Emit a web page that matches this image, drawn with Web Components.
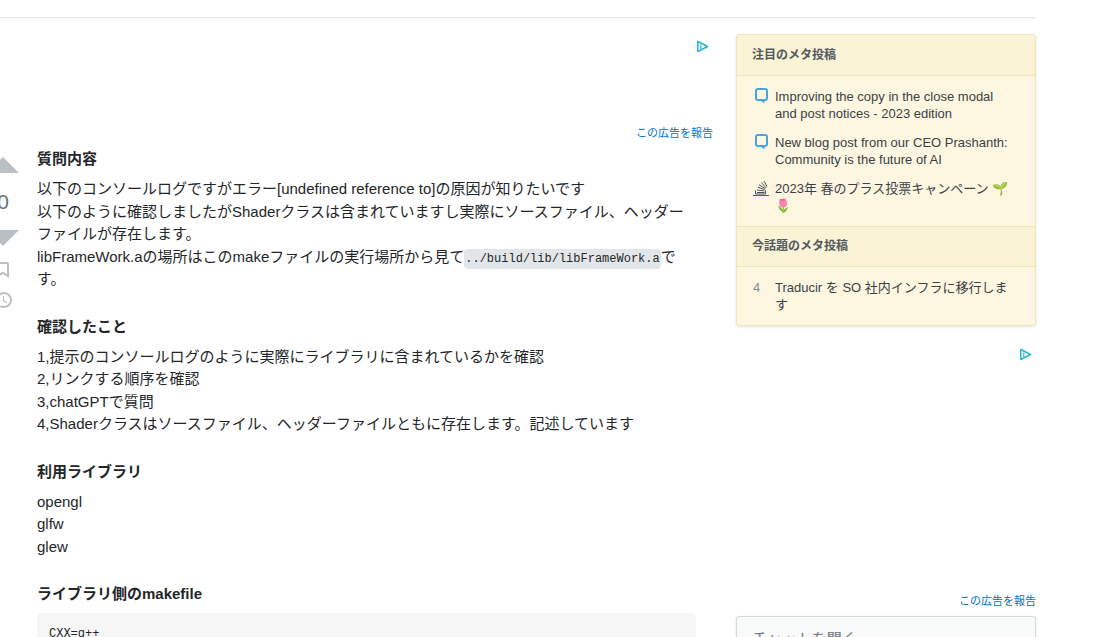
<!DOCTYPE html>
<html lang="ja">
<head>
<meta charset="utf-8">
<meta name="viewport" content="width=device-width, initial-scale=1">
<title>質問</title>
<style>
html{overflow-x:hidden;scrollbar-width:none}
body{margin:0;background:#fff;color:#232629;font-family:"Liberation Sans","Noto Sans CJK JP",sans-serif;font-size:15px;line-height:1.5}
</style>
</head>
<body>
<question-page></question-page>

<template id="page-t">
<style>
:host{display:block;padding:17px 60px 0 0}
.rule{border-top:1px solid #e3e6e8}
.cols{display:grid;grid-template-columns:minmax(0,1fr) 300px;gap:23px;padding-top:16px}
.post{display:grid;grid-template-columns:37px minmax(0,1fr);padding-right:17px;margin-top:7px}
aside{display:flex;flex-direction:column}
.meta{margin-bottom:16px}
chat-card{margin-top:7px}
</style>
<div class="rule"></div>
<div class="cols">
  <main>
    <ad-slot style="--ad-height:92px"></ad-slot>
    <div class="post"><vote-cell></vote-cell><post-body></post-body></div>
  </main>
  <aside>
    <bulletin-card class="meta">
      <bulletin-head>注目のメタ投稿</bulletin-head>
      <bulletin-list>
        <bulletin-item kind="meta">Improving the copy in the close modal and post notices - 2023 edition</bulletin-item>
        <bulletin-item kind="meta">New blog post from our CEO Prashanth: Community is the future of AI</bulletin-item>
        <bulletin-item kind="stack">2023年 春のプラス投票キャンペーン 🌱🌷</bulletin-item>
      </bulletin-list>
      <bulletin-head>今話題のメタ投稿</bulletin-head>
      <bulletin-list>
        <bulletin-item kind="4">Traducir を SO 社内インフラに移行します</bulletin-item>
      </bulletin-list>
    </bulletin-card>
    <ad-slot style="--ad-height:252px"></ad-slot>
    <chat-card>チャットを開く</chat-card>
  </aside>
</div>
</template>

<template id="ad-t">
<style>
:host{display:flex;flex-direction:column}
.ad{height:var(--ad-height);display:flex;justify-content:flex-end;align-items:flex-start;padding:6px 4px 0 0;box-sizing:border-box}
svg{display:block}
a{align-self:flex-end;color:#0074cc;font-size:11px;line-height:15px;text-decoration:none}
</style>
<div class="ad"><svg width="13" height="13" viewBox="0 0 13 13" fill="none" stroke="#28b5d1" stroke-width="1.5" stroke-linejoin="round"><path d="M1.800 1.500v10L11.500 6.500Z"/><path d="M4.800 4.500v4.500" stroke-width="1.200"/></svg></div>
<a href="#report">この広告を報告</a>
</template>

<template id="vote-t">
<style>
:host{display:flex;flex-direction:column;align-items:center;width:36px;margin-left:-15px;color:#6a737c}
button{display:block;border:0;padding:0;background:none;color:#babfc4;width:36px}
svg{display:block;margin:auto;fill:currentColor}
.n{font-size:21px;line-height:35px}
.s{height:30px}
</style>
<button aria-label="プラス投票"><svg width="36" height="36" viewBox="0 0 36 36"><path d="M2 25h32L18 9 2 25Z"/></svg></button>
<div class="n">0</div>
<button aria-label="マイナス投票"><svg width="36" height="36" viewBox="0 0 36 36"><path d="M2 11h32L18 27 2 11Z"/></svg></button>
<button class="s" aria-label="ブックマーク"><svg width="18" height="18" viewBox="0 0 18 18"><path d="m9 10.6 4 2.66V3H5v10.26l4-2.66ZM3 17V3c0-1.100.9-2 2-2h8a2 2 0 0 1 2 2v14l-6-4-6 4Z"/></svg></button>
<button class="s" aria-label="履歴"><svg width="20" height="18" viewBox="0 0 20 18"><path d="M3 9a8 8 0 1 1 3.73 6.77L8.2 14.3A6 6 0 1 0 5 9l3.01-.01-4 4-4-4h3L3 9Zm7-4h1.01L11 9.36l3.22 2.1-.6.93L10 10V5Z"/></svg></button>
</template>

<template id="body-t">
<style>
:host{display:block;padding-top:1px}
h4{font-size:15px;line-height:20px;margin:26px 0 9px}
h4:first-of-type{margin-top:0}
p{margin:0}
code,pre{font-family:"Liberation Mono","Noto Sans CJK JP",monospace;font-size:12px}
code{background:#e3e6e8;border-radius:4px;padding:3px 1px}
pre{margin:0;background:#f6f6f6;border-radius:5px;padding:12px;line-height:18px}
</style>
<h4>質問内容</h4>
<p>以下のコンソールログですがエラー[undefined reference to]の原因が知りたいです<br>以下のように確認しましたがShaderクラスは含まれていますし実際にソースファイル、ヘッダーファイルが存在します。<br>libFrameWork.aの場所はこのmakeファイルの実行場所から見て<code>../build/lib/libFrameWork.a</code>です。</p>
<h4>確認したこと</h4>
<p>1,提示のコンソールログのように実際にライブラリに含まれているかを確認<br>2,リンクする順序を確認<br>3,chatGPTで質問<br>4,Shaderクラスはソースファイル、ヘッダーファイルともに存在します。記述しています</p>
<h4>利用ライブラリ</h4>
<p>opengl<br>glfw<br>glew</p>
<h4>ライブラリ側のmakefile</h4>
<pre>CXX=g++</pre>
</template>

<template id="card-t">
<style>
:host{display:block;border:1px solid #f1e5bc;border-radius:3px;overflow:hidden;background:#fdf7e2;box-shadow:0 1px 3px #0000001c}
</style><slot></slot>
</template>
<template id="head-t">
<style>
:host{display:block;padding:10px 15px;background:#fbf3d5;border-bottom:1px solid #f1e5bc;color:#525960;font-size:12px;line-height:20px;font-weight:bold}
:host(:not(:first-child)){border-top:1px solid #f1e5bc;line-height:19px}
</style><slot></slot>
</template>
<template id="list-t">
<style>:host{display:flex;flex-direction:column;gap:12px;padding:12px 23px 12px 15px}</style><slot></slot>
</template>
<template id="item-t">
<style>
:host{display:grid;grid-template-columns:23px minmax(0,1fr);font-size:13px;line-height:17px}
a{color:#3b4045;text-decoration:none}
.i{color:#838c95;padding-left:1px}
svg{display:block}
</style>
<span class="i"></span><a href="#post"><slot></slot></a>
</template>
<template id="chat-t">
<style>
:host{display:block;border:1px solid #d6d9dc;border-radius:3px;background:#f8f9f9;box-shadow:0 1px 3px #0000001c;padding:12px 15px;color:#6a737c;font-size:15px;line-height:20px}
a{color:inherit;text-decoration:none}
</style><a href="#chat"><slot></slot></a>
</template>

<script>
const icons = {
  meta: '<svg width="16" height="17" viewBox="0 0 16 17"><rect x="3" y="1" width="11" height="11" rx="2" fill="none" stroke="#47a4dd" stroke-width="2"/><path d="M7.500 12.500h4v3Z" fill="#47a4dd"/></svg>',
  stack: '<svg width="16" height="17" viewBox="0 0 16 17" fill="none" stroke="#4d5154" stroke-width="1"><path d="M2.500 10.500v3.500h10v-3.500M4 12.500h7.500M4.100 10l7.300.9M4.900 7.300l6.900 2.200M6.200 4.800l6.200 3.900M8.400 2.600l4.800 5.200M11 1l3 5.600"/><path d="M0 15.500h16" stroke="#c8321a"/></svg>'
};
function define(name, id, setup) {
  customElements.define(name, class extends HTMLElement {
    constructor() {
      super();
      const root = this.attachShadow({ mode: 'open' });
      root.append(document.getElementById(id).content.cloneNode(true));
    }
    connectedCallback() { if (setup) setup(this); }
  });
}
define('bulletin-item', 'item-t', el => {
  const kind = el.getAttribute('kind');
  el.shadowRoot.querySelector('.i').innerHTML = icons[kind] || kind;
});
define('bulletin-list', 'list-t');
define('bulletin-head', 'head-t');
define('bulletin-card', 'card-t');
define('chat-card', 'chat-t');
define('ad-slot', 'ad-t');
define('vote-cell', 'vote-t');
define('post-body', 'body-t');
define('question-page', 'page-t');
</script>
</body>
</html>
